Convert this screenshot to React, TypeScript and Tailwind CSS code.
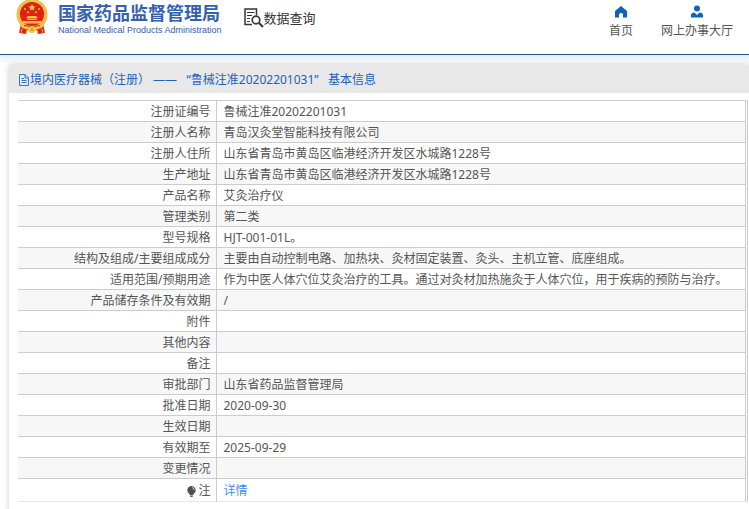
import React from "react";

const rows: [string, string][] = [
  ["注册证编号", "鲁械注准20202201031"],
  ["注册人名称", "青岛汉灸堂智能科技有限公司"],
  ["注册人住所", "山东省青岛市黄岛区临港经济开发区水城路1228号"],
  ["生产地址", "山东省青岛市黄岛区临港经济开发区水城路1228号"],
  ["产品名称", "艾灸治疗仪"],
  ["管理类别", "第二类"],
  ["型号规格", "HJT-001-01L。"],
  ["结构及组成/主要组成成分", "主要由自动控制电路、加热块、灸材固定装置、灸头、主机立管、底座组成。"],
  ["适用范围/预期用途", "作为中医人体穴位艾灸治疗的工具。通过对灸材加热施灸于人体穴位，用于疾病的预防与治疗。"],
  ["产品储存条件及有效期", "/"],
  ["附件", ""],
  ["其他内容", ""],
  ["备注", ""],
  ["审批部门", "山东省药品监督管理局"],
  ["批准日期", "2020-09-30"],
  ["生效日期", ""],
  ["有效期至", "2025-09-29"],
  ["变更情况", ""],
];

function Emblem() {
  return (
    <svg viewBox="0 0 32 34" className="h-[34px] w-8 shrink-0" aria-hidden="true">
      <path d="M5 24 L3 33 L10 34 L12 29 L20 29 L22 34 L29 33 L27 24Z" fill="#d8261c" />
      <circle cx="16" cy="14.5" r="15.5" fill="#edb83e" />
      <circle cx="16" cy="14.5" r="14" fill="none" stroke="#f7d56c" strokeDasharray="2 1" />
      <circle cx="16" cy="14" r="12" fill="#df2118" />
      <path d="M16 4l1 2.3 2.5.2-1.9 1.6.6 2.4L16 9.2l-2.2 1.3.6-2.4-1.9-1.6 2.5-.2z" fill="#f9d34c" />
      <g fill="#f5c443">
        <circle cx="9" cy="9" r="1" />
        <circle cx="23" cy="9" r="1" />
        <circle cx="12" cy="12.3" r="1" />
        <circle cx="20" cy="12.3" r="1" />
        <path d="M10 18l2-2h8l2 2zM11 18.6h10V20H11zM7 21h18l1 2.5H6z" />
      </g>
      <path d="M4 24q12 4 24 0l-2 4q-10 3-20 0z" fill="#f2c348" />
      <path d="M8 25.5q8 2.500 16 0" fill="none" stroke="#d8261c" />
      <circle cx="16" cy="29.500" r="3.500" fill="#f3c64a" />
      <circle cx="16" cy="29.500" r="1.500" fill="#d99a2b" />
      <path d="M6 29l-1 4M26 29l1 4M11 30l-1 4M21 30l1 4" stroke="#f0b73c" />
    </svg>
  );
}

function SearchDoc() {
  return (
    <svg viewBox="0 0 20 20" className="h-5 w-5 shrink-0" fill="none" stroke="#33363c" aria-hidden="true">
      <path d="M12.500 7V1H1v15.500h7" strokeWidth="1.500" />
      <path d="M3 4.500h7.500M3 7.500h5M3 10.500h3M3 13.500h3" strokeWidth="1.200" />
      <circle cx="12" cy="12" r="3.800" strokeWidth="1.700" />
      <path d="M15 15l4 4" strokeWidth="2.200" />
    </svg>
  );
}

function DocIcon() {
  return (
    <svg viewBox="0 0 10 12" className="h-3 w-[10px] shrink-0" fill="none" stroke="#3474c6" aria-hidden="true">
      <path d="M.5.5H6L9.500 4v7.500H.5zM6 .5V4h3.500M2.500 4.500H5M2.500 6.500h5M2.500 8.500h5" />
    </svg>
  );
}

export default function App() {
  return (
    <div className="bg-white font-['Noto_Sans','Noto_Sans_CJK_SC',sans-serif] text-xs text-[#555]">
      <header className="flex h-[55px] items-start justify-between border-b border-[#1e559b] px-4">
        <div className="flex items-start">
          <a href="#" className="flex items-start gap-[10px] text-[#3560ad]">
            <Emblem />
            <span className="block pt-[2px]">
              <span className="block text-lg leading-[22px] font-bold whitespace-nowrap">国家药品监督管理局</span>
              <span className="block font-['Liberation_Sans',sans-serif] text-[9px] leading-3 whitespace-nowrap">
                National Medical Products Administration
              </span>
            </span>
          </a>
          <a href="#" className="ml-[22px] flex items-center pt-2 text-[13px] leading-5 text-[#333]">
            <SearchDoc />
            数据查询
          </a>
        </div>
        <nav className="flex gap-7 pt-[5px] leading-5 text-[#555]">
          <a href="#" className="flex flex-col items-center gap-[3px]">
            <svg viewBox="0 0 12 12" className="h-[13px] w-3" fill="#1262b8" aria-hidden="true">
              <path d="M6 .5L0 5.500V12h4V8.500q2-2 4 0V12h4V5.500z" />
            </svg>
            首页
          </a>
          <a href="#" className="flex flex-col items-center gap-[3px]">
            <svg viewBox="0 0 12 13" className="h-[13px] w-3" fill="#1262b8" aria-hidden="true">
              <circle cx="6" cy="3.500" r="3" />
              <path d="M0 12.500V10q0-2 3.500-2.500L6 10l2.500-2.500Q12 8 12 10v2.500z" />
            </svg>
            网上办事大厅
          </a>
        </nav>
      </header>
      <div className="h-[10px] bg-linear-to-b from-[#e6f2fc] to-white" />
      <main className="ml-[9px] bg-white pb-2 shadow-[0_0_6px_#ccc]">
        <h1 className="flex h-7 items-center gap-px bg-[#e8e8e8] pt-px pl-[10px] whitespace-pre text-[#1b62bd]">
          <DocIcon />
          境内医疗器械（注册） ——{"   "}“鲁械注准20202201031”{"   "}基本信息
        </h1>
        <div className="pt-[7px] pr-px pl-[9px]">
          <table className="w-full table-fixed border-collapse border-r-3 border-double border-[#ccc]">
            <colgroup>
              <col className="w-[198px]" />
              <col />
            </colgroup>
            <tbody>
              {rows.map(([label, value]) => (
                <tr key={label} className="h-[21px] border-t border-[#ccc] even:bg-[#f7f7f7]">
                  <th scope="row" className="border-r border-[#ccc] pt-[2px] pr-[5px] pb-0 pl-[7px] text-right leading-[18px] font-normal">
                    {label}
                  </th>
                  <td className="pt-[2px] pr-[5px] pb-0 pl-[7px] leading-[18px] whitespace-nowrap">{value}</td>
                </tr>
              ))}
              <tr className="h-[23px] border-t border-b border-t-[#ccc] border-b-[#e8e8e8]">
                <th scope="row" className="border-r border-[#ccc] pt-[2px] pr-[5px] pb-0 pl-[7px] leading-5 font-normal">
                  <span className="flex items-center justify-end gap-[2px]">
                    <svg viewBox="0 0 9 11" className="h-[11px] w-[9px]" fill="#505050" aria-hidden="true">
                      <path d="M4.500 0a4.200 4.200 0 0 1 2.500 7.500L6 9H3L2 7.500A4.200 4.200 0 0 1 4.500 0zM3 9.500h3L5.500 11h-2z" />
                      <path d="M5 1.500Q7 2 7.200 4" fill="none" stroke="#fff" strokeWidth=".7" />
                    </svg>
                    注
                  </span>
                </th>
                <td className="pt-[2px] pr-[5px] pb-0 pl-[7px] leading-5">
                  <a href="#" className="text-[#3a8ee6]">详情</a>
                </td>
              </tr>
            </tbody>
          </table>
        </div>
      </main>
    </div>
  );
}
